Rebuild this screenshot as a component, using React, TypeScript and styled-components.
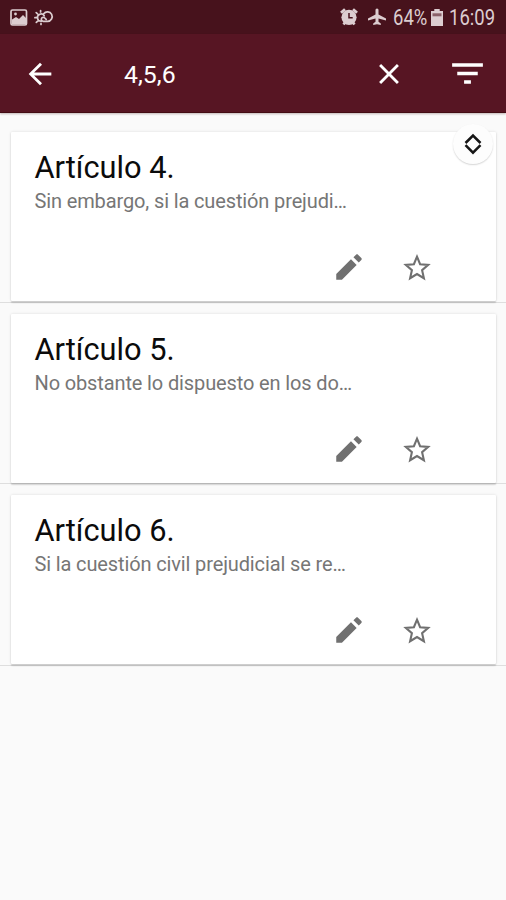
import React from "react";
import styled, { createGlobalStyle } from "styled-components";

const GlobalStyle = createGlobalStyle`
  html, body { margin: 0; padding: 0; background: #fafafa; }
  * { box-sizing: border-box; }
  body { font-family: Roboto, "Liberation Sans", sans-serif; }
  svg { display: block; flex: none; }
`;

const Screen = styled.div`
  width: 506px;
  height: 900px;
  overflow: hidden;
  background: #fafafa;
  display: flex;
  flex-direction: column;
`;

const StatusBar = styled.div`
  height: 34px;
  flex: none;
  background: #47121c;
  color: #dccdd0;
  display: flex;
  align-items: center;
  justify-content: space-between;
  padding: 0 11px 0 10px;
`;

const StatusGroup = styled.div`
  display: flex;
  align-items: center;
`;

const StatusText = styled.span<{ $width: number; $gap?: number }>`
  display: block;
  width: ${(p) => p.$width}px;
  margin-left: ${(p) => p.$gap ?? 0}px;
  padding-top: 1px;
  font-size: 22px;
  line-height: 34px;
  white-space: nowrap;
  transform: scaleX(0.84);
  transform-origin: left center;
`;

const StatusIcon = styled.svg<{ $gap?: number }>`
  margin-left: ${(p) => p.$gap ?? 0}px;
`;

const Toolbar = styled.header`
  height: 79px;
  flex: none;
  background: #571523;
  border-bottom: 1px solid #430c14;
  box-shadow: 0 1px 2px rgba(60, 20, 20, 0.3);
  color: #fff;
  display: flex;
  align-items: center;
  padding: 1px 18px 0 23px;
`;

const IconButton = styled.button<{ $gap?: number }>`
  border: 0;
  padding: 0;
  margin: 0 0 0 ${(p) => p.$gap ?? 0}px;
  background: none;
  color: inherit;
  display: flex;
`;

const Query = styled.div`
  flex: 1;
  padding: 2px 0 0 67px;
  font-size: 24.8px;
  line-height: 30px;
`;

const Content = styled.main`
  position: relative;
  flex: 1;
  padding-top: 8px;
`;

const Row = styled.div`
  height: 181.5px;
  padding: 11px 10px 0 11px;
  border-bottom: 1px solid #dedede;
`;

const Card = styled.article`
  height: 169px;
  background: #fff;
  border-radius: 1px;
  box-shadow: 0 1.5px 1.5px rgba(0, 0, 0, 0.14), 0 0 3px rgba(0, 0, 0, 0.12);
  padding: 18px 62px 0 24px;
  display: flex;
  flex-direction: column;
`;

const Title = styled.h2`
  margin: 0 0 0 -0.5px;
  font-size: 30.8px;
  line-height: 36px;
  font-weight: 400;
  color: #0b0b0b;
`;

const Summary = styled.p`
  margin: 3px 0 0 -0.5px;
  font-size: 20px;
  letter-spacing: -0.13px;
  line-height: 24px;
  color: #767676;
  white-space: nowrap;
`;

const Actions = styled.div`
  margin: 37px 0 0;
  color: #707070;
  display: flex;
  align-items: center;
  justify-content: flex-end;
`;

const ScrollHandle = styled.button`
  position: absolute;
  top: 11px;
  right: 13px;
  width: 40px;
  height: 40px;
  padding: 0;
  border: 0;
  border-radius: 50%;
  background: #fdfdfd;
  box-shadow: 0 1px 1.5px rgba(0, 0, 0, 0.17);
  display: flex;
  align-items: center;
  justify-content: center;
`;

type GlyphProps = { size: number; d: string };
const Glyph = ({ size, d }: GlyphProps) => (
  <svg width={size} height={size} viewBox="0 0 24 24" fill="currentColor">
    <path d={d} />
  </svg>
);

const BACK = "M20 11H7.83l5.59-5.59L12 4l-8 8 8 8 1.41-1.41L7.83 13H20v-2z";
const CLOSE =
  "M19 6.41L17.59 5 12 10.59 6.41 5 5 6.41 10.59 12 5 17.59 6.41 19 12 13.41 17.59 19 19 17.59 13.41 12z";
const FILTER = "M10 18h4v-2h-4v2zM3 6v2h18V6H3zm3 7h12v-2H6v2z";
const EDIT =
  "M3 17V21h4L17.4 10.6l-4-4L3 17zM20.71 7.04c.39-.39.39-1.02 0-1.41l-2.34-2.34c-.39-.39-1.02-.39-1.41 0l-1.83 1.83 3.75 3.75 1.83-1.83z";

const articles = [
  { title: "Artículo 4.", summary: "Sin embargo, si la cuestión prejudi…" },
  { title: "Artículo 5.", summary: "No obstante lo dispuesto en los do…" },
  { title: "Artículo 6.", summary: "Si la cuestión civil prejudicial se re…" },
];

export default function App() {
  return (
    <>
      <GlobalStyle />
      <Screen>
        <StatusBar>
          <StatusGroup>
            <StatusIcon width="18" height="17" viewBox="0 0 18 17">
              <rect x="1" y="1" width="15.5" height="15" rx="1.5" fill="none" stroke="currentColor" strokeWidth="1.7" />
              <path d="M2 10.5l4-2.5 3 2 4-4 3.5 3.5v6H2z" fill="currentColor" />
              <circle cx="5.5" cy="5" r="1.4" fill="currentColor" />
            </StatusIcon>
            <StatusIcon $gap={6} width="20" height="17" viewBox="0 0 20 17" fill="none" stroke="currentColor" strokeWidth="1.7" strokeLinecap="round">
              <path d="M7.2 12.2a3.6 3.6 0 1 1 3-5.4M6.6 1.6v1.3M2.2 3.6l1.4 1.2M.9 8.7h1.6M2.3 13.4l1.4-1.3M7 14.4v1" />
              <path d="M9.3 12.3a2 2 0 1 1 .9-3.8M9.3 12.3h4.3a4.7 4.7 0 1 0-3.9-7.5M10.2 8.5l2 1.9" />
            </StatusIcon>
          </StatusGroup>
          <StatusGroup>
            <StatusIcon width="18" height="18" viewBox="0 0 18 18">
              <path d="M1 4.8L5 1.2M17 4.8L13 1.2M3.5 16.5l2-2.5M14.5 16.5l-2-2.5" stroke="currentColor" strokeWidth="2.8" />
              <circle cx="9" cy="9.3" r="7.6" fill="currentColor" />
              <path d="M9 5v4.8h3.7" fill="none" stroke="#47121c" strokeWidth="1.5" />
            </StatusIcon>
            <StatusIcon $gap={9} width="20" height="18" viewBox="0 0 20 18" fill="currentColor">
              <path d="M10 .5c1 0 1.5.8 1.5 1.8v4.2l7.5 4v2l-7.5-2v3.3l2.3 1.8v1.5L10 16.3l-3.8.8v-1.5l2.3-1.8v-3.3L1 12.5v-2l7.5-4V2.3c0-1 .5-1.8 1.5-1.8z" />
            </StatusIcon>
            <StatusText $width={35} $gap={6}>64%</StatusText>
            <StatusIcon $gap={3} width="12" height="17" viewBox="0 0 12 17">
              <path d="M3.3 0h5.4v2H12v15H0V2h3.3z" fill="currentColor" />
              <path d="M1.5 4.3h9v3h-9z" fill="#8a6068" />
            </StatusIcon>
            <StatusText $width={46} $gap={6}>16:09</StatusText>
          </StatusGroup>
        </StatusBar>
        <Toolbar>
          <IconButton aria-label="Atrás"><Glyph size={34} d={BACK} /></IconButton>
          <Query>4,5,6</Query>
          <IconButton aria-label="Borrar"><Glyph size={34} d={CLOSE} /></IconButton>
          <IconButton aria-label="Filtrar" $gap={41}><Glyph size={41} d={FILTER} /></IconButton>
        </Toolbar>
        <Content>
          {articles.map((a) => (
            <Row key={a.title}>
              <Card>
                <Title>{a.title}</Title>
                <Summary>{a.summary}</Summary>
                <Actions>
                  <IconButton aria-label="Editar"><Glyph size={34} d={EDIT} /></IconButton>
                  <IconButton aria-label="Favorito" $gap={34}>
                    <svg width="34" height="34" viewBox="0 0 34 34" fill="none" stroke="currentColor" strokeWidth="2.1">
                      <path d="M17 6.7l3.1 7.5 8.1.7-6.1 5.3 1.8 8-6.9-4.200-6.900 4.200 1.800-8-6.100-5.300 8.100-.7z" />
                    </svg>
                  </IconButton>
                </Actions>
              </Card>
            </Row>
          ))}
          <ScrollHandle aria-label="Desplazar">
            <svg width="20" height="22" viewBox="0 0 20 22" fill="none" stroke="#161616" strokeWidth="2.500">
              <path d="M2.500 10L10 2.500l7.500 7.500M2.500 12.200l7.500 7.500 7.500-7.500" />
            </svg>
          </ScrollHandle>
        </Content>
      </Screen>
    </>
  );
}
